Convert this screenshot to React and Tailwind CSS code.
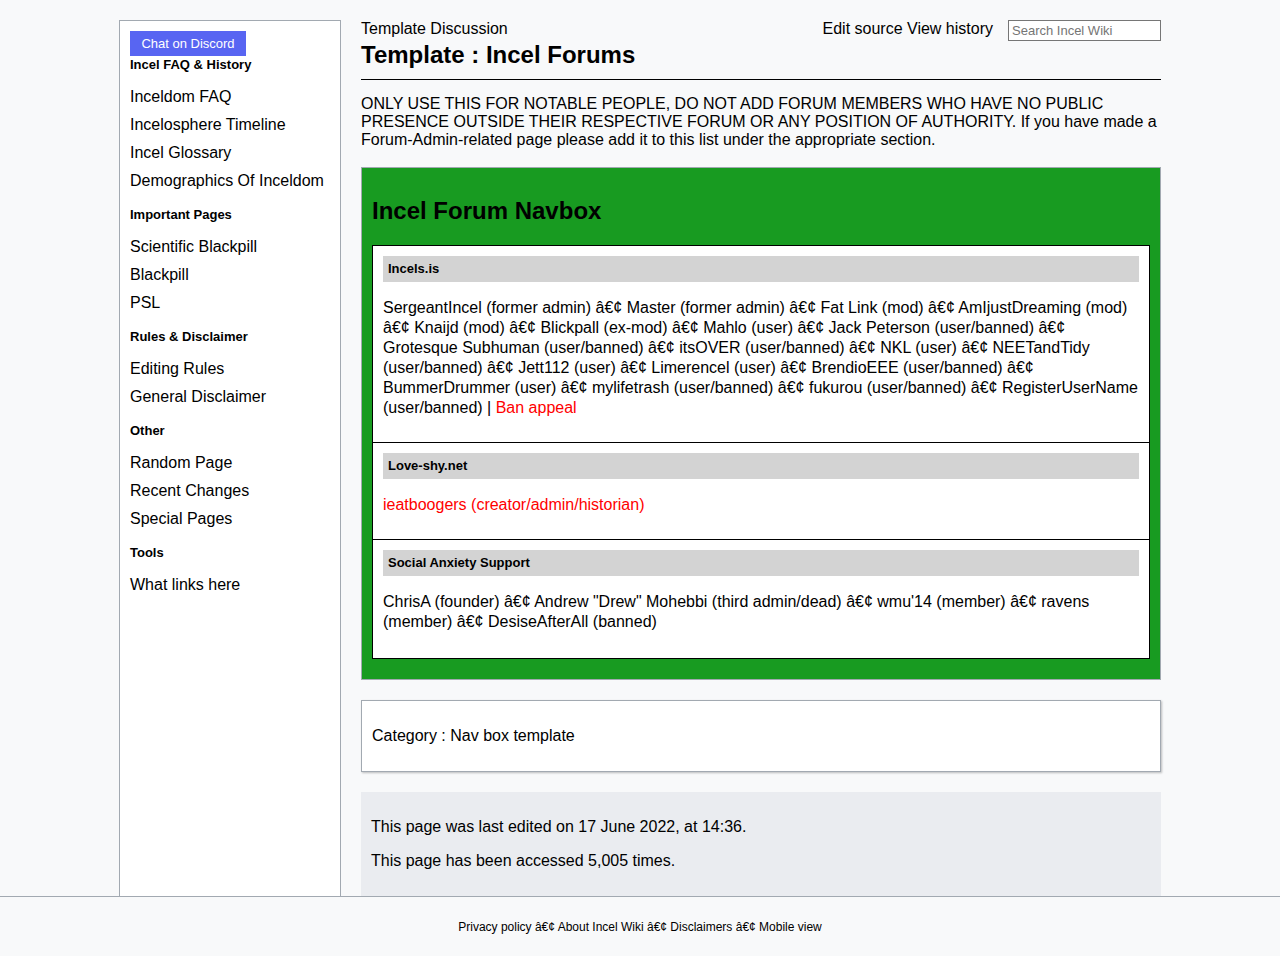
const sidebar = [
  { title: 'Incel FAQ & History', links: ['Inceldom FAQ', 'Incelosphere Timeline', 'Incel Glossary', 'Demographics Of Inceldom'] },
  { title: 'Important Pages', links: ['Scientific Blackpill', 'Blackpill', 'PSL'] },
  { title: 'Rules & Disclaimer', links: ['Editing Rules', 'General Disclaimer'] },
  { title: 'Other', links: ['Random Page', 'Recent Changes', 'Special Pages'] },
  { title: 'Tools', links: ['What links here'] },
]

const sep = ' \u00e2\u20ac\u00a2 '

const incelsIs = [
  'SergeantIncel (former admin)', 'Master (former admin)', 'Fat Link (mod)', 'AmIjustDreaming (mod)',
  'Knaijd (mod)', 'Blickpall (ex-mod)', 'Mahlo (user)', 'Jack Peterson (user/banned)',
  'Grotesque Subhuman (user/banned)', 'itsOVER (user/banned)', 'NKL (user)', 'NEETandTidy (user/banned)',
  'Jett112 (user)', 'Limerencel (user)', 'BrendioEEE (user/banned)', 'BummerDrummer (user)',
  'mylifetrash (user/banned)', 'fukurou (user/banned)', 'RegisterUserName (user/banned)',
]

const sas = ['ChrisA (founder)', 'Andrew "Drew" Mohebbi (third admin/dead)', "wmu'14 (member)", 'ravens (member)', 'DesiseAfterAll (banned)']

function Section({ title, children, last }) {
  return (
    <div className={`px-[10px] pt-[10px] ${last ? 'pb-[26px]' : 'pb-6 border-b border-black'}`}>
      <div className="h-[26px] bg-[#d3d3d3] px-[5px] flex items-center text-[13px] font-bold">{title}</div>
      <div className="mt-4 leading-5">{children}</div>
    </div>
  )
}

export default function App() {
  return (
    <div className="h-[956px] flex flex-col bg-[#f8f9fa] text-black overflow-hidden font-['Liberation_Sans',Arial,sans-serif]">
      <div className="flex-1 min-h-0 overflow-hidden">
        <div className="flex gap-5 pl-[119px] pt-5 h-full">
          {/* Sidebar */}
          <aside className="w-[222px] shrink-0 bg-white border border-b-0 border-[#a2a9b1] px-[10px] pt-[10px]">
            <button className="h-[25px] w-[116px] bg-[#5865f2] text-white text-[13px] flex items-center justify-center">
              Chat on Discord
            </button>
            {sidebar.map((s, i) => (
              <div key={s.title} className={i === 0 ? 'pt-px' : 'mt-3'}>
                <h3 className="text-[13px] font-bold leading-4 mb-[10px]">{s.title}</h3>
                <ul>
                  {s.links.map(l => (
                    <li key={l} className="text-base leading-[28px]">{l}</li>
                  ))}
                </ul>
              </div>
            ))}
          </aside>

          {/* Main */}
          <main className="w-[800px] shrink-0">
            <div className="flex justify-between items-start">
              <div className="leading-[18px]">Template Discussion</div>
              <div className="flex items-start gap-[15px]">
                <span className="leading-[18px]">Edit source View history</span>
                <input
                  placeholder="Search Incel Wiki"
                  className="w-[153px] h-[21px] border border-[#767676] bg-white px-[3px] text-[13px] placeholder:text-[#757575] outline-none"
                />
              </div>
            </div>
            <h1 className="text-2xl font-bold leading-7 pb-[10px] border-b border-black">
              Template : Incel Forums
            </h1>
            <p className="mt-[15px] leading-[18px]">
              ONLY USE THIS FOR NOTABLE PEOPLE, DO NOT ADD FORUM MEMBERS WHO HAVE NO PUBLIC PRESENCE OUTSIDE THEIR
              RESPECTIVE FORUM OR ANY POSITION OF AUTHORITY. If you have made a Forum-Admin-related page please add it
              to this list under the appropriate section.
            </p>

            {/* Navbox */}
            <div className="mt-[18px] bg-[#189b21] border border-[#a2a9b1] px-[10px] pb-5">
              <h2 className="text-2xl font-bold leading-7 mt-[29px] mb-5">Incel Forum Navbox</h2>
              <div className="bg-white border border-black">
                <Section title="Incels.is">
                  {incelsIs.join(sep)} | <span className="text-[#ff0000]">Ban appeal</span>
                </Section>
                <Section title="Love-shy.net">
                  <span className="text-[#ff0000]">ieatboogers (creator/admin/historian)</span>
                </Section>
                <Section title="Social Anxiety Support" last>
                  {sas.join(sep)}
                </Section>
              </div>
            </div>

            {/* Category */}
            <div className="mt-5 h-[72px] bg-white border border-[#a2a9b1] shadow-[1px_1px_2px_rgba(0,0,0,0.25)] flex items-center px-[10px]">
              Category : Nav box template
            </div>

            {/* Page info */}
            <div className="mt-5 bg-[#eaecf0] px-[10px] pt-[26px] pb-10 leading-[18px]">
              <p>This page was last edited on 17 June 2022, at 14:36.</p>
              <p className="mt-4">This page has been accessed 5,005 times.</p>
            </div>
          </main>
        </div>
      </div>

      <footer className="h-[60px] shrink-0 border-t border-[#a2a9b1] bg-[#f8f9fa] flex items-center justify-center text-xs">
        Privacy policy {sep.trim()} About Incel Wiki {sep.trim()} Disclaimers {sep.trim()} Mobile view
      </footer>
    </div>
  )
}
